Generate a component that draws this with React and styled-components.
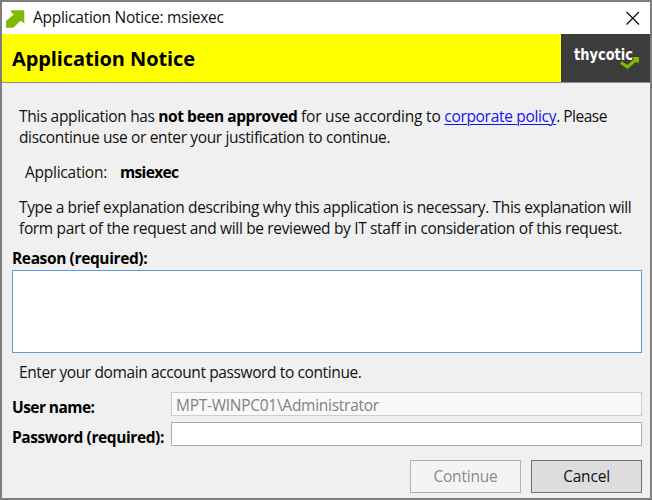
import React from "react";
import styled, { createGlobalStyle } from "styled-components";

const GlobalStyle = createGlobalStyle`
  * { box-sizing: border-box; }
  body { margin: 0; }
`;

const Window = styled.div`
  width: 652px;
  height: 500px;
  display: flex;
  flex-direction: column;
  border: 2px solid #7e7e7e;
  background: #f0f0f0;
  color: #111;
  font: 15.5px/21px "Open Sans", "Noto Sans", sans-serif;
`;

const TitleBar = styled.header`
  display: flex;
  flex: none;
  align-items: center;
  height: 32px;
  padding: 0 10px 0 4px;
  background: #fff;
`;

const Title = styled.span`
  flex: 1;
  margin: -1px 0 0 7px;
  letter-spacing: -0.28px;
`;

const Banner = styled.div`
  display: flex;
  flex: none;
  height: 49px;
  background: #ff0;
  border-bottom: 1px solid #8c8c8c;
`;

const Heading = styled.h1`
  flex: 1;
  margin: 0;
  padding: 1px 0 0 10px;
  color: #000;
  font-size: 20px;
  line-height: 48px;
  letter-spacing: -0.1px;
`;

const Brand = styled.div`
  display: flex;
  width: 89px;
  background: #3c3c3c;
`;

const Body = styled.main`
  display: flex;
  flex-direction: column;
  flex: 1;
  padding: 23px 8px 4px 10px;
`;

const Paragraph = styled.p`
  margin: ${(p) => p.$margin || "0"};
  padding-left: 7px;
`;

const Line = styled.span`
  display: block;
  white-space: pre;
  letter-spacing: ${(p) => p.$tracking}px;
`;

const Run = styled.span`
  letter-spacing: ${(p) => p.$tracking}px;
`;

const Strong = styled.strong`
  color: #000;
  letter-spacing: ${(p) => p.$tracking}px;
`;

const Link = styled.a`
  color: #1414f0;
  letter-spacing: -0.32px;
  text-decoration: underline;
  text-decoration-thickness: 1px;
  text-underline-offset: 2px;
`;

const Detail = styled.div`
  display: flex;
  gap: 13px;
  margin: 14px 0 14px 13px;
`;

const Label = styled.label`
  color: #000;
  font-weight: 700;
  letter-spacing: ${(p) => p.$tracking}px;
  white-space: nowrap;
`;

const ReasonLabel = styled(Label)`
  margin: 9px 0 1px;
`;

const ReasonBox = styled.textarea`
  display: block;
  width: 100%;
  height: 83px;
  margin: 0;
  padding: 4px;
  border: 1px solid #569de5;
  border-radius: 0;
  background: #fff;
  font: inherit;
  outline: none;
  resize: none;
`;

const Form = styled.div`
  display: grid;
  grid-template-columns: 159px 1fr;
  row-gap: 6px;
`;

const Field = styled.input`
  width: 100%;
  height: 24px;
  margin: 0;
  padding: 1px 4px 0;
  border: 1px solid #abadb3;
  border-radius: 0;
  background: #fff;
  font: inherit;
  letter-spacing: -0.27px;
  outline: none;

  &:disabled {
    border-color: #cccdd0;
    background: #f9f9f9;
    color: #818181;
  }
`;

const FieldLabel = styled(Label)`
  padding-top: 5px;
  height: 24px;
`;

const Actions = styled.div`
  display: flex;
  justify-content: flex-end;
  gap: 10px;
  margin-top: 14px;
`;

const Button = styled.button`
  width: 111px;
  height: 33px;
  padding: 0;
  border: 1px solid #707070;
  border-radius: 0;
  background: #ddd;
  color: #111;
  font: inherit;
  letter-spacing: -0.2px;

  &:disabled {
    border-color: #adb2b5;
    background: #f4f4f4;
    color: #8a8a8a;
  }
`;

const ArrowIcon = () => (
  <svg width="20" height="20" viewBox="0 0 20 20">
    <path d="M5 2.300h13.300v13l-3.800-2.500L7.300 19.700H0V13l8-6.700-3-2z" fill="#7fba00" />
  </svg>
);

const CloseIcon = () => (
  <svg width="15" height="15" viewBox="0 0 15 15">
    <path d="M1.500 1l12.500 12.500M14 1L1.500 13.500" stroke="#111" strokeWidth="1.300" />
  </svg>
);

const LogoText = styled.text`
  fill: #fff;
  font: 700 15px "DejaVu Sans", sans-serif;
`;

const Logo = () => (
  <svg width="89" height="48" viewBox="0 0 89 48">
    <LogoText x="13" y="26" textLength="59" lengthAdjust="spacingAndGlyphs">thycotic</LogoText>
    <path d="M60 28.500L66.500 33L75.500 25" fill="none" stroke="#7fba00" strokeWidth="3.200" />
    <path d="M71.500 23H78v5.500h-3z" fill="#7fba00" />
  </svg>
);

export default function App() {
  return (
    <>
      <GlobalStyle />
      <Window>
        <TitleBar>
          <ArrowIcon />
          <Title>Application Notice: msiexec</Title>
          <CloseIcon />
        </TitleBar>
        <Banner>
          <Heading>Application Notice</Heading>
          <Brand><Logo /></Brand>
        </Banner>
        <Body>
          <Paragraph>
            <Line $tracking={-0.35}>
              This application has <Strong $tracking={-0.43}>not been approved</Strong>
              <Run $tracking={-0.22}> for use according to </Run>
              <Link>corporate policy</Link>
              <Run $tracking={-0.5}>. Please</Run>
            </Line>
            <Line $tracking={-0.36}>discontinue use or enter your justification to continue.</Line>
          </Paragraph>
          <Detail>
            <Run $tracking={-0.25}>Application:</Run>
            <Strong $tracking={-0.65}>msiexec</Strong>
          </Detail>
          <Paragraph>
            <Line $tracking={-0.362}>Type a brief explanation describing why this application is necessary. This explanation will</Line>
            <Line $tracking={-0.338}>form part of the request and will be reviewed by IT staff in consideration of this request.</Line>
          </Paragraph>
          <ReasonLabel $tracking={-0.38}>Reason (required):</ReasonLabel>
          <ReasonBox />
          <Paragraph $margin="9px 0 9px">
            <Line $tracking={-0.385}>Enter your domain account password to continue.</Line>
          </Paragraph>
          <Form>
            <FieldLabel $tracking={-0.56}>User name:</FieldLabel>
            <Field disabled defaultValue={"MPT-WINPC01\\Administrator"} />
            <FieldLabel $tracking={-0.41}>Password (required):</FieldLabel>
            <Field type="password" />
          </Form>
          <Actions>
            <Button disabled>Continue</Button>
            <Button>Cancel</Button>
          </Actions>
        </Body>
      </Window>
    </>
  );
}
